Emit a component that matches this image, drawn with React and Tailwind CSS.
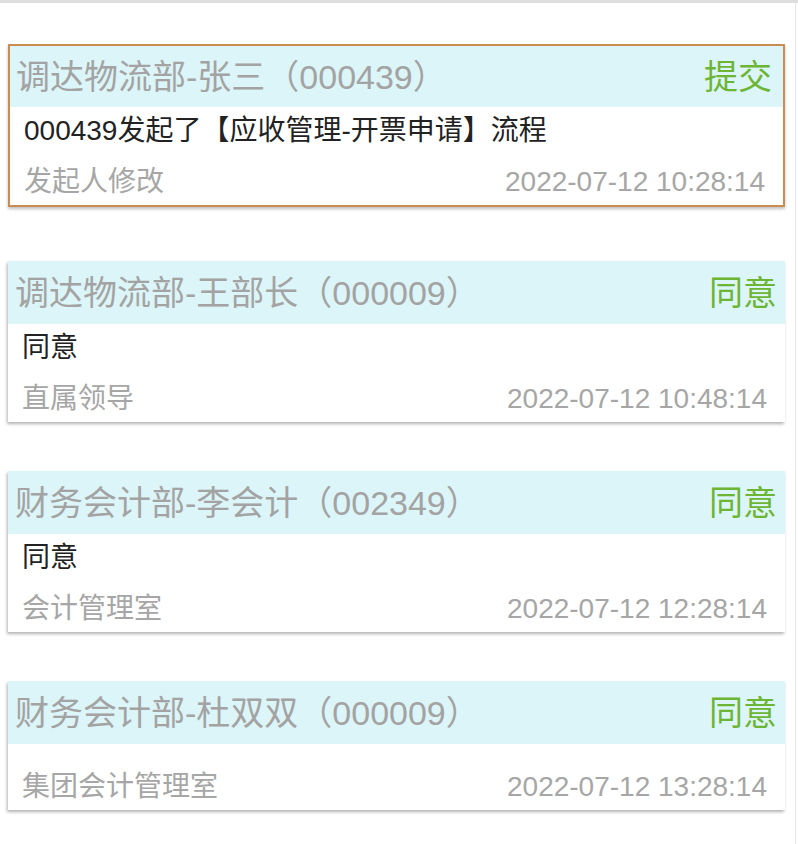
const records = [
  {
    name: "调达物流部-张三（000439）",
    status: "提交",
    content: "000439发起了【应收管理-开票申请】流程",
    role: "发起人修改",
    time: "2022-07-12 10:28:14",
    active: true,
  },
  {
    name: "调达物流部-王部长（000009）",
    status: "同意",
    content: "同意",
    role: "直属领导",
    time: "2022-07-12 10:48:14",
  },
  {
    name: "财务会计部-李会计（002349）",
    status: "同意",
    content: "同意",
    role: "会计管理室",
    time: "2022-07-12 12:28:14",
  },
  {
    name: "财务会计部-杜双双（000009）",
    status: "同意",
    content: "",
    role: "集团会计管理室",
    time: "2022-07-12 13:28:14",
  },
];

const RecordCard = ({ item }) => {
  return (
    <div
      className={
        item.active
          ? "bg-white border-2 border-[#c98d52] shadow-[0_2px_3px_rgba(0,0,0,0.25)] mb-[5px]"
          : "bg-white shadow-[-1px_2px_3px_rgba(0,0,0,0.3)]"
      }
    >
      <div
        className={
          item.active
            ? "flex items-center justify-between bg-[#dcf5f8] h-[61px] pl-[6px] pr-[11px]"
            : "flex items-center justify-between bg-[#dcf5f8] h-[63px] pl-[7px] pr-[8px]"
        }
      >
        <span className="text-[34px] text-[#a3a3a3] leading-none">{item.name}</span>
        <span className="text-[34px] text-[#6cb535] leading-none">{item.status}</span>
      </div>
      <div className="flex flex-col pt-2 pb-[6px] pl-[14px] pr-[18px]">
        <div className="text-[28px] leading-[32px] text-[#222] mb-[18px]">{item.content}</div>
        <div className="flex items-center justify-between h-[34px] text-[#a6a6a6] text-[28px]">
          <span>{item.role}</span>
          <span>{item.time}</span>
        </div>
      </div>
    </div>
  );
};

export default function App() {
  return (
    <div className="w-[798px] min-h-[844px] bg-white border-t-[3px] border-[#dedede] font-['Liberation_Sans','Noto_Sans_CJK_SC',sans-serif]">
      <div className="w-[796px] min-h-[841px] border-r border-[#e6e6e6] flex flex-col gap-[49px] pt-[41px] pl-[8px] pr-[10px]">
        {records.map((item, i) => (
          <RecordCard key={i} item={item} />
        ))}
      </div>
    </div>
  );
}
